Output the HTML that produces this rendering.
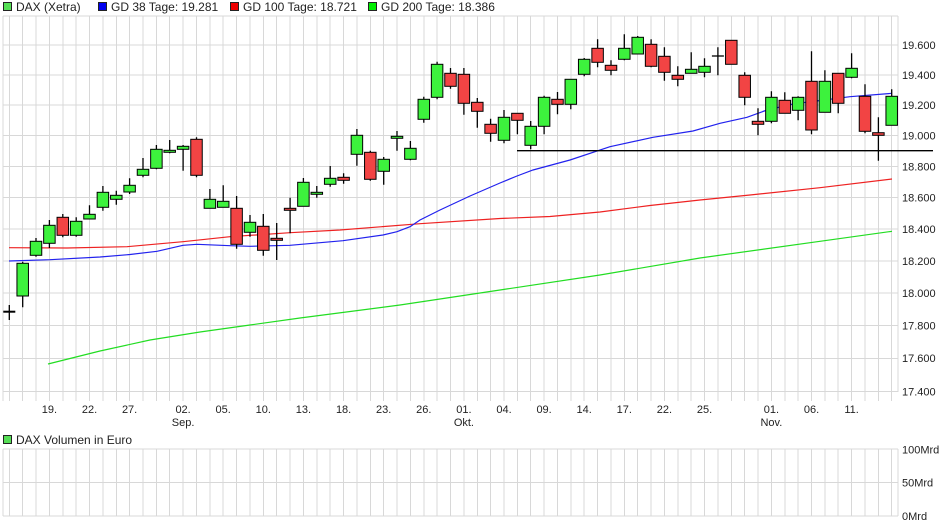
<!DOCTYPE html>
<html><head><meta charset="utf-8"><style>
html,body{margin:0;padding:0;background:#fff;}
svg{display:block;font-family:"Liberation Sans",sans-serif;}
.g{fill:#3df23d;stroke:#000;stroke-width:1}
.r{fill:#f24444;stroke:#000;stroke-width:1}
.lab{font-size:12px;fill:#222}
.yl{font-size:11px;fill:#222}
</style></head><body>
<svg width="940" height="526" viewBox="0 0 940 526">
<rect x="3.5" y="2.5" width="8" height="8" fill="#55e055" stroke="#222"/>
<text x="16" y="11" class="lab">DAX (Xetra)</text>
<rect x="98.5" y="2.5" width="8" height="8" fill="#0000ee" stroke="#222"/>
<text x="111" y="11" class="lab">GD 38 Tage: 19.281</text>
<rect x="230.5" y="2.5" width="8" height="8" fill="#ee0000" stroke="#222"/>
<text x="243" y="11" class="lab">GD 100 Tage: 18.721</text>
<rect x="368.5" y="2.5" width="8" height="8" fill="#00ee00" stroke="#222"/>
<text x="381" y="11" class="lab">GD 200 Tage: 18.386</text>

<g stroke="#d8d8d8" stroke-width="1" shape-rendering="crispEdges">
<path d="M3 16V401M9.3 16V401M22.7 16V401M36 16V401M49.4 16V401M62.8 16V401M76.2 16V401M89.5 16V401M102.9 16V401M116.3 16V401M129.6 16V401M143 16V401M156.4 16V401M169.7 16V401M183.1 16V401M196.5 16V401M209.9 16V401M223.2 16V401M236.6 16V401M250 16V401M263.3 16V401M276.7 16V401M290.1 16V401M303.4 16V401M316.8 16V401M330.2 16V401M343.6 16V401M356.9 16V401M370.3 16V401M383.7 16V401M397 16V401M410.4 16V401M423.8 16V401M437.1 16V401M450.5 16V401M463.9 16V401M477.3 16V401M490.6 16V401M504 16V401M517.4 16V401M530.7 16V401M544.1 16V401M557.5 16V401M570.8 16V401M584.2 16V401M597.6 16V401M611 16V401M624.3 16V401M637.7 16V401M651.1 16V401M664.4 16V401M677.8 16V401M691.2 16V401M704.5 16V401M717.9 16V401M731.3 16V401M744.7 16V401M758 16V401M771.4 16V401M784.8 16V401M798.1 16V401M811.5 16V401M824.9 16V401M838.2 16V401M851.6 16V401M865 16V401M878.4 16V401M891.7 16V401M898 16V392"/>
<path d="M3 16H898M3 45H898M3 75H898M3 105H898M3 135.6H898M3 166.4H898M3 197.5H898M3 229H898M3 260.8H898M3 293H898M3 325.5H898M3 358.4H898M3 391.7H898"/>
<path d="M3 449V516M9.3 449V516M22.7 449V516M36 449V516M49.4 449V516M62.8 449V516M76.2 449V516M89.5 449V516M102.9 449V516M116.3 449V516M129.6 449V516M143 449V516M156.4 449V516M169.7 449V516M183.1 449V516M196.5 449V516M209.9 449V516M223.2 449V516M236.6 449V516M250 449V516M263.3 449V516M276.7 449V516M290.1 449V516M303.4 449V516M316.8 449V516M330.2 449V516M343.6 449V516M356.9 449V516M370.3 449V516M383.7 449V516M397 449V516M410.4 449V516M423.8 449V516M437.1 449V516M450.5 449V516M463.9 449V516M477.3 449V516M490.6 449V516M504 449V516M517.4 449V516M530.7 449V516M544.1 449V516M557.5 449V516M570.8 449V516M584.2 449V516M597.6 449V516M611 449V516M624.3 449V516M637.7 449V516M651.1 449V516M664.4 449V516M677.8 449V516M691.2 449V516M704.5 449V516M717.9 449V516M731.3 449V516M744.7 449V516M758 449V516M771.4 449V516M784.8 449V516M798.1 449V516M811.5 449V516M824.9 449V516M838.2 449V516M851.6 449V516M865 449V516M878.4 449V516M891.7 449V516M898 449V516"/>
<path d="M3 449H898M3 482.5H898M3 516H898"/>
</g>

<g class="yl">
<text x="902" y="49">19.600</text>
<text x="902" y="79">19.400</text>
<text x="902" y="109">19.200</text>
<text x="902" y="139.5">19.000</text>
<text x="902" y="170.5">18.800</text>
<text x="902" y="201.5">18.600</text>
<text x="902" y="233">18.400</text>
<text x="902" y="265">18.200</text>
<text x="902" y="297">18.000</text>
<text x="902" y="329.5">17.800</text>
<text x="902" y="362">17.600</text>
<text x="902" y="395.5">17.400</text>
<text x="902" y="453.5">100Mrd</text>
<text x="902" y="486.5">50Mrd</text>
<text x="902" y="520">0Mrd</text>
</g>

<g class="yl" text-anchor="middle">
<text x="49.4" y="413">19.</text>
<text x="89.5" y="413">22.</text>
<text x="129.6" y="413">27.</text>
<text x="183.1" y="413">02.</text>
<text x="183.1" y="426">Sep.</text>
<text x="223.2" y="413">05.</text>
<text x="263.3" y="413">10.</text>
<text x="303.4" y="413">13.</text>
<text x="343.6" y="413">18.</text>
<text x="383.7" y="413">23.</text>
<text x="423.8" y="413">26.</text>
<text x="463.9" y="413">01.</text>
<text x="463.9" y="426">Okt.</text>
<text x="504" y="413">04.</text>
<text x="544.1" y="413">09.</text>
<text x="584.2" y="413">14.</text>
<text x="624.3" y="413">17.</text>
<text x="664.4" y="413">22.</text>
<text x="704.5" y="413">25.</text>
<text x="771.4" y="413">01.</text>
<text x="771.4" y="426">Nov.</text>
<text x="811.5" y="413">06.</text>
<text x="851.6" y="413">11.</text>
</g>

<rect x="3.5" y="435.5" width="8" height="8" fill="#55dd55" stroke="#222"/>
<text x="16" y="444" class="lab">DAX Volumen in Euro</text>

<polyline fill="none" stroke="#22dd22" stroke-width="1.2" points="48,364 100,351 150,340 200,332 250,325 300,318 400,305 500,290 600,275 700,258 820,241.3 892,231.3"/>
<polyline fill="none" stroke="#ee2222" stroke-width="1.2" points="9,247.7 67,248 127,246.7 183,241.7 230,236.7 290,232.7 340,230 420,223.7 500,218.5 550,216.5 600,212 650,205.5 700,200 750,195 820,187.7 892,179"/>
<polyline fill="none" stroke="#2222ee" stroke-width="1.2" points="9,261 50,259.7 100,257 130,254.5 157,251.3 183,245.3 197,244.3 230,245.7 250,246.3 290,245.3 343,240.7 383,235 397,231.7 410,226.7 420,220 440,210 470,196 500,183 517,176 533,170 570,160 610,146.7 653,137.3 693,131 720,123.3 747,117.3 767,110 793,104 850,96.7 892,93.3"/>
<line x1="517" y1="150.7" x2="933" y2="150.7" stroke="#000" stroke-width="1.3"/>

<path stroke="#000" stroke-width="1.3" fill="none" d="M9.3 305V320M22.7 261.7V307.3M36 238V256.7M49.4 220V248M62.8 214V237.3M76.2 217.3V236.7M89.5 205.3V219M102.9 186V210.7M116.3 190.7V204.7M129.6 178.3V194M143 158V177.3M156.4 145V169.3M169.7 140V153.3M183.1 145V170.7M196.5 137.3V177.3M209.9 189V208.3M223.2 185.3V207.3M236.6 196V248.7M250 215V236.7M263.3 214V255.7M276.7 223V260M290.1 197.7V233.3M303.4 178V206.3M316.8 186V197.7M330.2 166V186.7M343.6 173.3V183.7M356.9 129V165.7M370.3 150.7V180.7M383.7 157V184.7M397 131V150.7M410.4 141V160.3M423.8 96.7V122.7M437.1 61.7V99.3M450.5 68V88.7M463.9 68V114.7M477.3 98V127.7M490.6 118.7V141.7M504 110V143.3M517.4 113.3V134.3M530.7 121V149.3M544.1 95.7V134.3M557.5 92V114.3M570.8 79.3V109.3M584.2 58V76.3M597.6 39.3V67.3M611 60.3V75.3M624.3 34.3V60.3M637.7 36V54M651.1 39.3V67.3M664.4 47.3V80.7M677.8 66.3V86.3M691.2 52.3V73.3M704.5 58.3V77.3M717.9 47.3V75.3M731.3 40.3V64.3M744.7 72.3V105.3M758 108.3V135.3M771.4 91.3V123.3M784.8 92.3V113.3M798.1 96.3V120.3M811.5 51.3V134.3M824.9 70.3V112.3M838.2 73.3V113.3M851.6 53.3V78.3M865 84.3V133.3M878.4 117.3V160.7M891.7 89.3V125.3"/>
<path stroke="#000" stroke-width="2" d="M3.3 311.7H15.3"/>
<path stroke="#000" stroke-width="1.3" d="M711.9 56H723.9"/>

<rect class="g" x="16.95" y="263.3" width="11.5" height="32.7"/>
<rect class="g" x="30.25" y="241.3" width="11.5" height="14"/>
<rect class="g" x="43.65" y="225.3" width="11.5" height="18"/>
<rect class="r" x="57.05" y="217.3" width="11.5" height="18"/>
<rect class="g" x="70.45" y="221.3" width="11.5" height="14"/>
<rect class="g" x="83.75" y="214.3" width="11.5" height="4.7"/>
<rect class="g" x="97.15" y="192.3" width="11.5" height="15"/>
<rect class="g" x="110.55" y="195.3" width="11.5" height="4"/>
<rect class="g" x="123.85" y="185.3" width="11.5" height="6.7"/>
<rect class="g" x="137.25" y="169.3" width="11.5" height="6"/>
<rect class="g" x="150.65" y="149.3" width="11.5" height="19"/>
<rect class="g" x="163.95" y="150.3" width="11.5" height="2"/>
<rect class="g" x="177.35" y="146.3" width="11.5" height="3"/>
<rect class="r" x="190.75" y="139.3" width="11.5" height="36"/>
<rect class="g" x="204.15" y="199.3" width="11.5" height="9"/>
<rect class="g" x="217.45" y="201.3" width="11.5" height="6"/>
<rect class="r" x="230.85" y="208.3" width="11.5" height="36"/>
<rect class="g" x="244.25" y="222.3" width="11.5" height="10"/>
<rect class="r" x="257.55" y="226.3" width="11.5" height="24"/>
<rect class="r" x="270.95" y="238.3" width="11.5" height="2"/>
<rect class="r" x="284.35" y="208.3" width="11.5" height="2"/>
<rect class="g" x="297.65" y="182.3" width="11.5" height="24"/>
<rect class="g" x="311.05" y="192.3" width="11.5" height="2"/>
<rect class="g" x="324.45" y="178.3" width="11.5" height="6"/>
<rect class="r" x="337.85" y="177.3" width="11.5" height="3"/>
<rect class="g" x="351.15" y="135.3" width="11.5" height="19"/>
<rect class="r" x="364.55" y="152.3" width="11.5" height="27"/>
<rect class="g" x="377.95" y="159.3" width="11.5" height="12"/>
<rect class="g" x="391.25" y="136.3" width="11.5" height="2"/>
<rect class="g" x="404.65" y="148.3" width="11.5" height="11"/>
<rect class="g" x="418.05" y="99.3" width="11.5" height="20"/>
<rect class="g" x="431.35" y="64.3" width="11.5" height="33"/>
<rect class="r" x="444.75" y="73.3" width="11.5" height="13"/>
<rect class="r" x="458.15" y="74.3" width="11.5" height="29"/>
<rect class="r" x="471.55" y="102.3" width="11.5" height="9"/>
<rect class="r" x="484.85" y="124.3" width="11.5" height="9"/>
<rect class="g" x="498.25" y="117.3" width="11.5" height="23"/>
<rect class="r" x="511.65" y="113.3" width="11.5" height="7"/>
<rect class="g" x="524.95" y="126.3" width="11.5" height="19"/>
<rect class="g" x="538.35" y="97.3" width="11.5" height="29"/>
<rect class="r" x="551.75" y="99.3" width="11.5" height="5"/>
<rect class="g" x="565.05" y="79.3" width="11.5" height="25"/>
<rect class="g" x="578.45" y="59.3" width="11.5" height="15"/>
<rect class="r" x="591.85" y="48.3" width="11.5" height="14"/>
<rect class="r" x="605.25" y="65.3" width="11.5" height="5"/>
<rect class="g" x="618.55" y="48.3" width="11.5" height="11"/>
<rect class="g" x="631.95" y="37.3" width="11.5" height="16.7"/>
<rect class="r" x="645.35" y="44.3" width="11.5" height="22"/>
<rect class="r" x="658.65" y="56.3" width="11.5" height="16"/>
<rect class="r" x="672.05" y="75.3" width="11.5" height="4"/>
<rect class="g" x="685.45" y="69.3" width="11.5" height="4"/>
<rect class="g" x="698.75" y="66.3" width="11.5" height="6"/>
<rect class="r" x="725.55" y="40.3" width="11.5" height="24"/>
<rect class="r" x="738.95" y="75.3" width="11.5" height="22"/>
<rect class="r" x="752.25" y="121.3" width="11.5" height="3"/>
<rect class="g" x="765.65" y="97.3" width="11.5" height="24"/>
<rect class="r" x="779.05" y="100.3" width="11.5" height="13"/>
<rect class="g" x="792.35" y="97.3" width="11.5" height="13"/>
<rect class="r" x="805.75" y="81.3" width="11.5" height="48.7"/>
<rect class="g" x="819.15" y="81.3" width="11.5" height="31"/>
<rect class="r" x="832.45" y="73.3" width="11.5" height="30"/>
<rect class="g" x="845.85" y="68.3" width="11.5" height="9"/>
<rect class="r" x="859.25" y="96.3" width="11.5" height="35"/>
<rect class="r" x="872.65" y="132.7" width="11.5" height="2.6"/>
<rect class="g" x="885.95" y="96.3" width="11.5" height="29"/>
</svg>
</body></html>
